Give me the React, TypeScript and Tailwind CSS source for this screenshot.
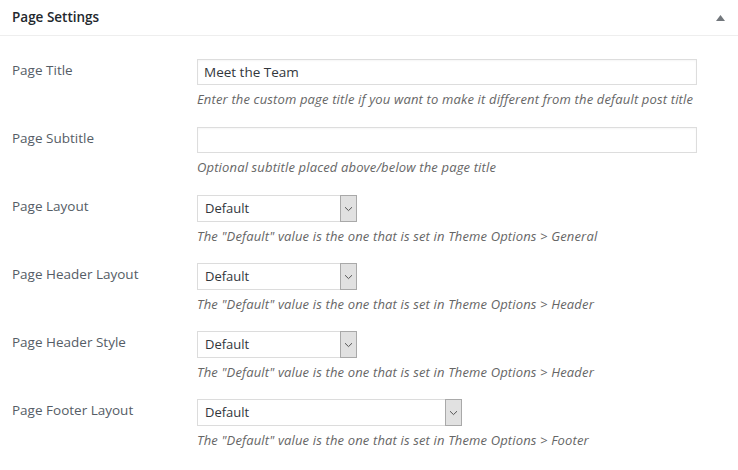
const font = { fontFamily: '"Segoe UI", "Open Sans", "Noto Sans", sans-serif' };

type Field =
  | { label: string; kind: "text"; value: string; hint: string }
  | { label: string; kind: "select"; value: string; hint: string; wide?: boolean };

const fields: Field[] = [
  {
    label: "Page Title",
    kind: "text",
    value: "Meet the Team",
    hint: "Enter the custom page title if you want to make it different from the default post title",
  },
  {
    label: "Page Subtitle",
    kind: "text",
    value: "",
    hint: "Optional subtitle placed above/below the page title",
  },
  {
    label: "Page Layout",
    kind: "select",
    value: "Default",
    hint: 'The "Default" value is the one that is set in Theme Options > General',
  },
  {
    label: "Page Header Layout",
    kind: "select",
    value: "Default",
    hint: 'The "Default" value is the one that is set in Theme Options > Header',
  },
  {
    label: "Page Header Style",
    kind: "select",
    value: "Default",
    hint: 'The "Default" value is the one that is set in Theme Options > Header',
  },
  {
    label: "Page Footer Layout",
    kind: "select",
    value: "Default",
    hint: 'The "Default" value is the one that is set in Theme Options > Footer',
    wide: true,
  },
];

const Chevron = () => (
  <svg width="9" height="6" viewBox="0 0 9 6" fill="none">
    <path d="M1 1.2 L4.5 4.6 L8 1.2" stroke="#555" strokeWidth="1" />
  </svg>
);

const FakeSelect = ({ value, wide }: { value: string; wide?: boolean }) => (
  <div
    className={`flex h-[27px] items-stretch border border-[#dcdcdc] bg-white ${
      wide ? "w-[265px]" : "w-[160px]"
    }`}
  >
    <span className="flex flex-1 items-center pl-[7px] text-[13px] text-[#32373c]">
      {value}
    </span>
    <span className="-my-px -mr-px flex w-[17px] items-center justify-center border border-[#a9a9a9] bg-[#e1e1e1]">
      <Chevron />
    </span>
  </div>
);

export default function App() {
  return (
    <div className="h-[470px] w-[738px] bg-white" style={font}>
      <div className="flex h-[36px] items-center justify-between border-b border-[#eeeeee] pl-[12px] pr-[13px]">
        <h2 className="text-[13.5px] font-semibold text-[#23282d]">Page Settings</h2>
        <svg width="9" height="6" viewBox="0 0 9 6">
          <path d="M4.5 0 L9 6 L0 6 Z" fill="#72777c" />
        </svg>
      </div>
      <div className="pt-[23px]">
        {fields.map((f) => (
          <div key={f.label} className="flex h-[68px] pl-[12px]">
            <div className="w-[185px] text-[13.5px] font-medium leading-[22px] text-[#555d66]">
              {f.label}
            </div>
            <div className="flex flex-col">
              {f.kind === "text" ? (
                <div className="flex h-[26px] w-[500px] items-center border border-[#dddddd] px-[6px] text-[13.5px] text-[#32373c] shadow-[inset_0_1px_2px_rgba(0,0,0,0.04)]">
                  {f.value}
                </div>
              ) : (
                <FakeSelect value={f.value} wide={f.wide} />
              )}
              <p className="mt-[5px] text-[13px] italic leading-[18px] tracking-[0.15px] text-[#666]">
                {f.hint}
              </p>
            </div>
          </div>
        ))}
      </div>
    </div>
  );
}
